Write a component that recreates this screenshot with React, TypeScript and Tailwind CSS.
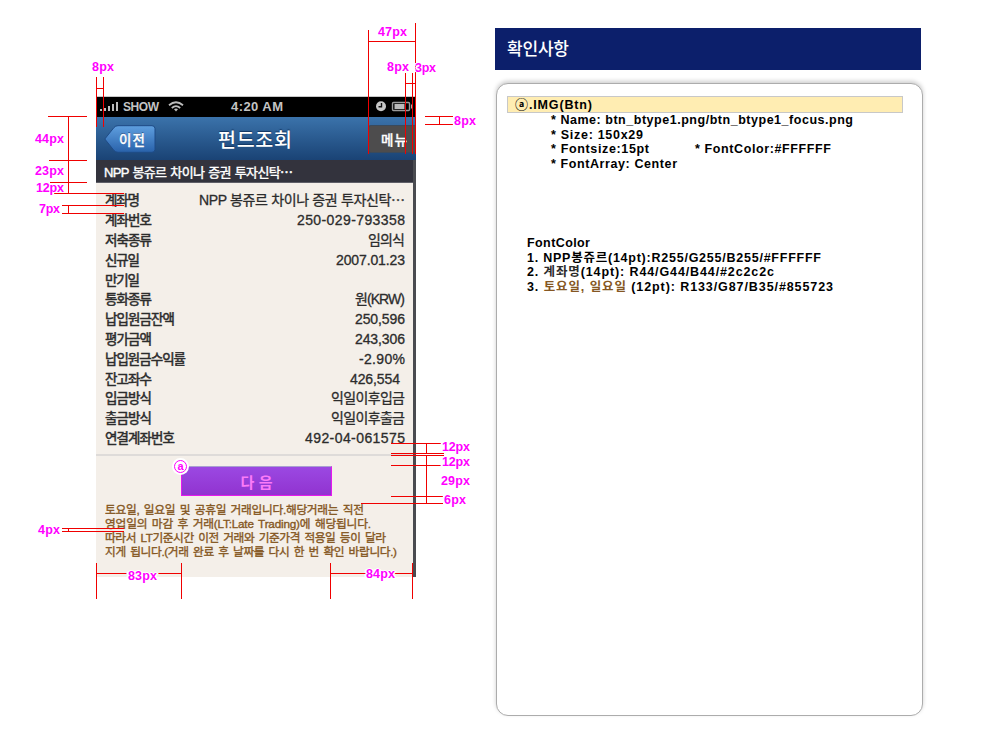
import { useLayoutEffect, useRef, useState, type ReactNode } from 'react';

/* Text whose tracking is computed so that it spans an exact width. */
function Fit({ w, className = '', children }: { w: number; className?: string; children: ReactNode }) {
  const ref = useRef<HTMLSpanElement>(null);
  const [ls, setLs] = useState(0);
  useLayoutEffect(() => {
    const el = ref.current;
    if (!el) return;
    el.style.letterSpacing = '0px';
    const natural = el.getBoundingClientRect().width;
    const count = Array.from(el.textContent ?? '').length;
    const next = count > 1 ? (w - natural) / (count - 1) : 0;
    el.style.letterSpacing = `${next}px`;
    setLs(next);
  }, [w]);
  return (
    <span
      ref={ref}
      className={`inline-block whitespace-pre ${className}`}
      style={{ letterSpacing: ls, marginRight: -ls }}
    >
      {children}
    </span>
  );
}

type Row = { label: string; lw: number; value: string; vw: number; inset?: boolean };

const rows: Row[] = [
  { label: '계좌명', lw: 35, value: 'NPP 봉쥬르 차이나 증권 투자신탁⋯', vw: 206 },
  { label: '계좌번호', lw: 47, value: '250-029-793358', vw: 108 },
  { label: '저축종류', lw: 47, value: '임의식', vw: 37 },
  { label: '신규일', lw: 35, value: '2007.01.23', vw: 69 },
  { label: '만기일', lw: 35, value: '', vw: 0 },
  { label: '통화종류', lw: 47, value: '원(KRW)', vw: 50 },
  { label: '납입원금잔액', lw: 70, value: '250,596', vw: 50 },
  { label: '평가금액', lw: 47, value: '243,306', vw: 50 },
  { label: '납입원금수익률', lw: 81, value: '-2.90%', vw: 46 },
  { label: '잔고좌수', lw: 47, value: '426,554', vw: 50, inset: true },
  { label: '입금방식', lw: 47, value: '익일이후입금', vw: 74 },
  { label: '출금방식', lw: 47, value: '익일이후출금', vw: 74 },
  { label: '연결계좌번호', lw: 70, value: '492-04-061575', vw: 100 },
];

const notice: [string, number][] = [
  ['토요일, 일요일 및 공휴일 거래입니다.해당거래는 직전', 259],
  ['영업일의 마감 후 거래(LT:Late Trading)에 해당됩니다.', 266],
  ['따라서 LT기준시간 이전 거래와 기준가격 적용일 등이 달라', 281],
  ['지게 됩니다.(거래 완료 후 날짜를 다시 한 번 확인 바랍니다.)', 292],
];

/* Dimension lines: x, y, width, height */
const guides: [number, number, number, number][] = [
  [96, 77, 1, 50], [103, 77, 1, 50], [96, 88, 8, 1],
  [48, 116, 39, 1], [49, 160, 38, 1], [50, 182, 37, 1], [54, 193, 70, 1], [68, 116, 1, 78],
  [62, 205, 62, 1], [62, 213, 62, 1], [68, 205, 1, 9],
  [368, 30, 1, 124], [415, 23, 1, 131], [368, 41, 48, 1],
  [405, 73, 1, 81], [412, 73, 1, 81], [405, 83, 11, 1],
  [425, 116, 28, 1], [425, 124, 28, 1], [439, 116, 1, 9],
  [391, 443, 50, 1], [391, 453, 53, 1], [391, 455, 53, 1], [426, 443, 1, 11], [426, 455, 1, 49],
  [391, 465, 51, 1], [391, 496, 52, 1], [361, 503, 82, 1],
  [62, 528, 62, 1], [62, 531, 62, 1], [68, 528, 1, 4],
  [96, 563, 1, 36], [181, 563, 1, 36], [96, 573, 86, 1],
  [330, 563, 1, 36], [412, 563, 1, 36], [330, 573, 83, 1],
];

/* Dimension labels: text, x, centre y, width */
const dims: [string, number, number, number][] = [
  ['8px', 92, 67, 22], ['47px', 378, 32, 29], ['8px', 387, 67, 22], ['3px', 415, 68, 21],
  ['8px', 454, 121, 22], ['44px', 35, 139, 29], ['23px', 35, 171, 29], ['12px', 36, 188, 28],
  ['7px', 39, 209, 21], ['12px', 442, 447, 28], ['12px', 442, 462, 28], ['29px', 441, 481, 29],
  ['6px', 444, 500, 22], ['4px', 38, 530, 22], ['83px', 128, 576, 29], ['84px', 366, 574, 29],
];

function StatusBar() {
  return (
    <div className="flex h-5 items-center bg-black pl-1 font-['Liberation_Sans'] text-[12px] font-bold leading-5 text-[#c4c4c4]">
      <svg className="block" width="20" height="20" viewBox="0 0 20 20" fill="#bdbdbd">
        <rect x="0" y="12" width="2" height="2" />
        <rect x="4" y="11" width="2" height="3" />
        <rect x="8" y="9" width="2" height="5" />
        <rect x="12" y="7" width="2" height="7" />
        <rect x="16" y="5" width="2" height="9" />
      </svg>
      <div className="w-[36px] pl-[3px]"><Fit w={36}>SHOW</Fit></div>
      <svg className="ml-[12px] block" width="16" height="20" viewBox="0 0 16 20" fill="none" stroke="#bdbdbd" strokeWidth="1.8">
        <path d="M1 8.200 Q8 2.200 15 8.200" />
        <path d="M3.800 11 Q8 7.200 12.200 11" />
        <path d="M6 12.300 Q8 10.800 10 12.300 L8 14.400Z" fill="#bdbdbd" stroke="none" />
      </svg>
      <div className="ml-[47px] w-[53px] text-[13px]"><Fit w={52}>4:20 AM</Fit></div>
      <svg className="ml-[90px] block" width="42" height="20" viewBox="0 0 42 20">
        <circle cx="7" cy="9.300" r="5" fill="#c8c8c8" />
        <path d="M7.500 6v3.800H4.500" stroke="#111" strokeWidth="1.400" fill="none" />
        <rect x="18.500" y="5.500" width="17" height="8" rx="1" fill="none" stroke="#9a9a9a" strokeWidth="1.400" />
        <rect x="20.500" y="7" width="10" height="5" fill="#b9b9b9" />
        <rect x="37" y="7.500" width="2" height="4" fill="#aaa" />
      </svg>
    </div>
  );
}

function NavBar() {
  return (
    <div className="flex h-[43px] items-center bg-linear-to-b from-[#3b73ab] to-[#1a4375] pl-2 font-medium text-white">
      <div className="relative flex h-7 w-[52px] items-center pl-[15px]">
        <svg className="absolute left-0 top-0" width="52" height="28" viewBox="0 0 52 28">
          <defs>
            <linearGradient id="back" x1="0" y1="0" x2="0" y2="1">
              <stop offset="0" stopColor="#5f9fdf" />
              <stop offset="1" stopColor="#2962ab" />
            </linearGradient>
          </defs>
          <path
            d="M0.800 14 L10 2.500 Q11.500 0.700 14 0.700 H48 Q51 0.700 51 3.700 V24.300 Q51 27.300 48 27.300 H14 Q11.500 27.300 10 25.500Z"
            fill="url(#back)"
            stroke="#1e4b86"
          />
        </svg>
        <Fit w={26} className="relative text-[13.5px] leading-[26px] [-webkit-text-stroke:0.3px_#fff] [text-shadow:0_-1px_0_#1e4b86]">이전</Fit>
      </div>
      <div className="ml-[62px] w-[76px] text-[19.5px] leading-[42px] [text-shadow:0_-1px_1px_#123561]">
        <Fit w={74}>펀드조회</Fit>
      </div>
      <div className="ml-auto flex h-7 w-[48px] items-center rounded-l-[3px] border border-r-0 border-[#3a4a5c] bg-[#4d4c4d] pl-[12px]">
        <Fit w={26} className="text-[13.5px] leading-6 [-webkit-text-stroke:0.3px_#fff]">메뉴</Fit>
      </div>
    </div>
  );
}

function Phone() {
  return (
    <div className="mt-[96px] flex h-[481px] w-[320px] shrink-0 flex-col border-t border-[#c9c9c9] font-['Noto_Sans_CJK_KR',sans-serif]">
      <StatusBar />
      <NavBar />
      <div className="flex min-h-0 flex-1">
        <div className="flex w-[317px] flex-col bg-[#f4efe9] font-['Liberation_Sans','Noto_Sans_CJK_KR',sans-serif]">
          <div className="h-[23px] border-b border-[#5f5f68] bg-[#33333d] pl-2 text-[13px] leading-[25px] text-white [-webkit-text-stroke:0.4px_#fff] [word-spacing:1px]">
            <Fit w={189}>NPP 봉쥬르 차이나 증권 투자신탁⋯</Fit>
          </div>
          <div className="flex h-[273px] flex-col border-b-2 border-[#dedbd9] pl-[9px] pr-2 pt-2 text-[13.5px] text-[#2c2c2c]">
            {rows.map((r) => (
              <div key={r.label} className="flex h-[19.800px] shrink-0 items-center justify-between leading-[19px]">
                <Fit w={r.lw} className="[-webkit-text-stroke:0.5px_#2c2c2c]">{r.label}</Fit>
                <span className={r.inset ? 'pr-[5px]' : ''}>
                  {r.value && <Fit w={r.vw} className="text-[14px] [-webkit-text-stroke:0.3px_#2c2c2c]">{r.value}</Fit>}
                </span>
              </div>
            ))}
          </div>
          <div className="relative ml-[85px] mt-[10px] flex h-[30px] w-[151px] items-center justify-center border border-t-[#a99fd0] border-[#e619ee] bg-linear-to-b from-[#9b48e2] to-[#9133d0] font-['Noto_Sans_CJK_KR'] text-[15px] font-bold leading-[27px] text-[#fb7bf8]">
            <Fit w={32}>다 음</Fit>
            <div className="absolute -left-[10px] -top-[9px] flex size-[17px] items-center justify-center rounded-full bg-white">
              <div className="flex size-[13px] items-center justify-center rounded-full border-[1.5px] border-[#f0f] font-['Liberation_Sans'] text-[11px] font-bold leading-[8px] text-[#f0f]">
                <span className="-translate-y-px">a</span>
              </div>
            </div>
          </div>
          <div className="flex flex-col items-start pl-[9px] pt-[7px] text-[11.7px] leading-[14px] text-[#855723] [-webkit-text-stroke:0.35px_#855723] [word-spacing:1.5px]">
            {notice.map(([t, w]) => (
              <Fit key={t} w={w}>{t}</Fit>
            ))}
          </div>
        </div>
        <div className="w-[3px] bg-[#4a4b50]" />
      </div>
    </div>
  );
}

function Notes() {
  return (
    <div className="ml-[79px] mt-7 w-[428px] shrink-0">
      <div className="h-[42px] w-[426px] bg-[#0c1f6b] pl-3 font-['Noto_Sans_CJK_KR',sans-serif] text-[17px] font-medium leading-[39px] text-white">
        <Fit w={62}>확인사항</Fit>
      </div>
      <div className="ml-[1px] mt-[13px] h-[633px] w-[427px] rounded-[12px] border border-[#acacac] bg-white pl-[10px] pt-3 font-['Liberation_Sans','Noto_Sans_CJK_KR',sans-serif] text-[12.5px] font-bold leading-[14.500px] text-black shadow-[0_-2px_4px_#cfcfcf]">
        <div className="flex h-[17px] w-[396px] items-center border border-[#c8c8c8] bg-[#ffedb2] pl-[7px] pt-px">
          <Fit w={77}><span className="font-['Noto_Sans_CJK_KR'] text-[13px] leading-[12px]">ⓐ</span>.IMG(Btn)</Fit>
        </div>
        <div className="flex flex-col items-start pl-[44px]">
          <Fit w={302}>* Name: btn_btype1.png/btn_btype1_focus.png</Fit>
          <Fit w={92}>* Size: 150x29</Fit>
          <div className="flex">
            <div className="w-[144px]"><Fit w={98}>* Fontsize:15pt</Fit></div>
            <Fit w={136}>* FontColor:#FFFFFF</Fit>
          </div>
          <Fit w={126}>* FontArray: Center</Fit>
        </div>
        <div className="mt-[65px] flex flex-col items-start pl-5">
          <Fit w={63}>FontColor</Fit>
          <Fit w={294}>1. NPP봉쥬르(14pt):R255/G255/B255/#FFFFFF</Fit>
          <Fit w={247}>2. <span className="text-[#2c2c2c]">계좌명</span>(14pt): R44/G44/B44/#2c2c2c</Fit>
          <Fit w={306}>3. <span className="text-[#855723]">토요일, 일요일</span> (12pt): R133/G87/B35/#855723</Fit>
        </div>
      </div>
    </div>
  );
}

function Dimensions() {
  return (
    <div className="pointer-events-none absolute inset-0">
      <svg className="absolute inset-0" width="1000" height="740" shapeRendering="crispEdges" fill="#f00000">
        {guides.map(([x, y, w, h], i) => (
          <rect key={i} x={x} y={y} width={w} height={h} />
        ))}
      </svg>
      {dims.map(([t, x, y, w], i) => (
        <div
          key={i}
          className="absolute font-['Liberation_Sans'] text-[12.5px] font-bold leading-[14px] text-[#f0f] [text-shadow:1px_0_0_#fff,-1px_0_0_#fff,0_1px_0_#fff,0_-1px_0_#fff,2px_0_0_#fff,-2px_0_0_#fff]"
          style={{ left: x, top: y - 7 }}
        >
          <Fit w={w}>{t}</Fit>
        </div>
      ))}
    </div>
  );
}

export default function App() {
  return (
    <div className="relative flex h-[740px] w-[1000px] overflow-hidden bg-white pl-[96px]">
      <Phone />
      <Notes />
      <Dimensions />
    </div>
  );
}
